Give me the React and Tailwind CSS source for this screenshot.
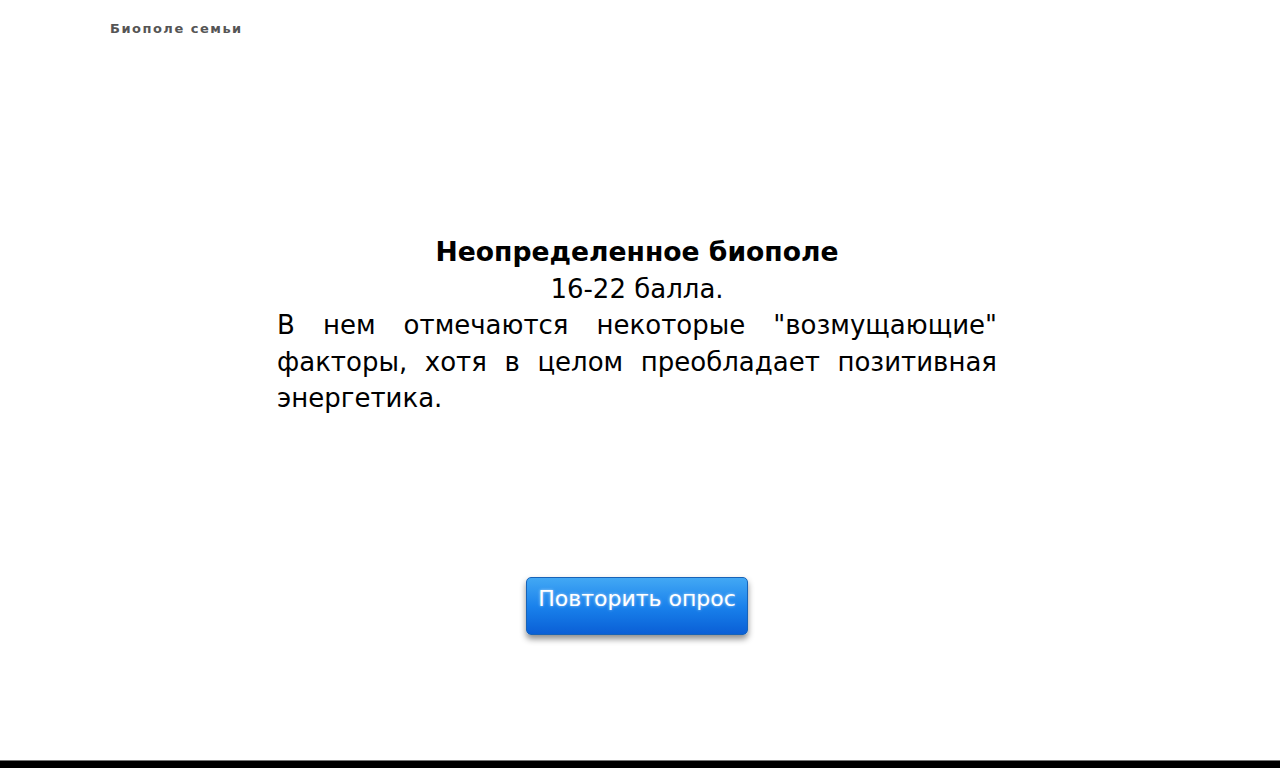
export default function App() {
  return (
    <div className="w-[1280px] h-[768px] bg-white flex flex-col overflow-hidden">
      {/* Заголовок */}
      <div className="h-[58px] pl-[110px] pt-[20px] text-[13px] font-bold text-[#555555] font-['DejaVu_Sans',sans-serif] tracking-[1.5px] leading-[18px]">
        Биополе семьи
      </div>

      {/* Результат */}
      <div className="flex-1 flex flex-col items-center pr-[6px]">
        <div className="mt-[176px] w-[720px] text-[26px] leading-[36.5px] text-black font-['DejaVu_Sans',sans-serif]">
          <div className="text-center font-bold text-[26.6px]">Неопределенное биополе</div>
          <div className="text-center">16-22 балла.</div>
          <p className="text-justify">
            В нем отмечаются некоторые "возмущающие" факторы, хотя в целом преобладает позитивная энергетика.
          </p>
        </div>

        <button className="mt-[160px] w-[222px] h-[58px] rounded-[5px] bg-gradient-to-b from-[#42a8f4] via-[#1a82ec] to-[#0b5fd6] border border-[#1763b8] shadow-[0_4px_6px_rgba(0,0,0,0.45)] text-white text-[22px] font-['DejaVu_Sans',sans-serif] flex items-start justify-center pt-[4px] [text-shadow:0_0_3px_rgba(255,255,255,0.6)]">
          Повторить опрос
        </button>
      </div>

      {/* Нижняя панель */}
      <div className="h-[8px] bg-black border-t border-[#777777]"></div>
    </div>
  );
}
